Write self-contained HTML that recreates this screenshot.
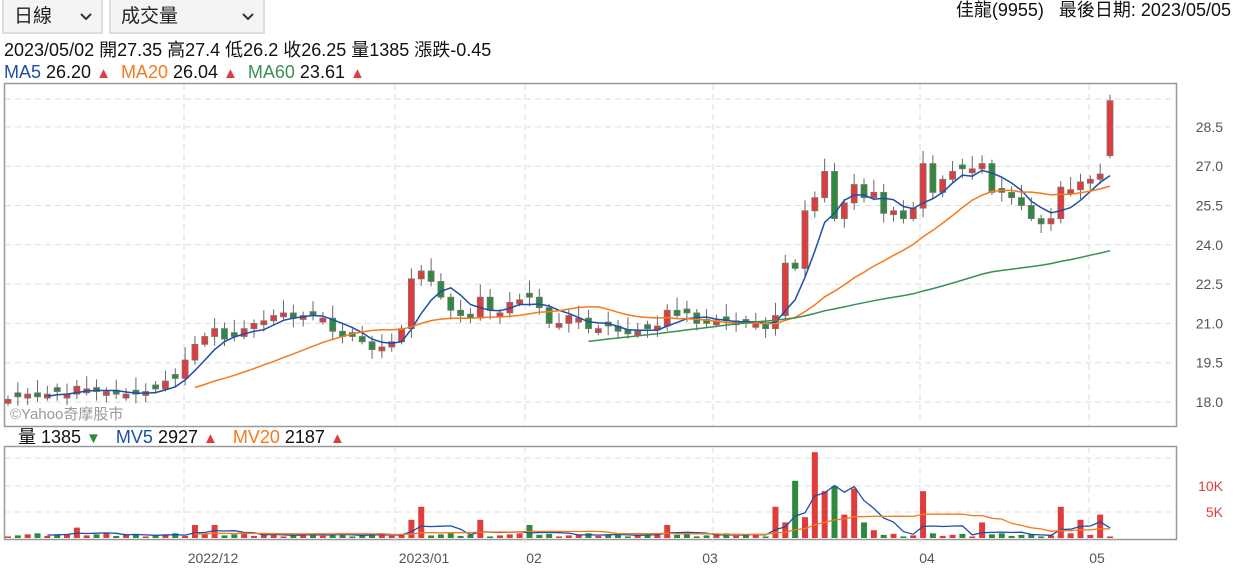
<!DOCTYPE html>
<html><head><meta charset="utf-8"><style>
body{margin:0;width:1241px;height:573px;background:#fff;font-family:"Liberation Sans","Noto Sans CJK TC",sans-serif;overflow:hidden;position:relative}
.sel{position:absolute;top:0;height:34px;background:#f4f4f4;border:2px solid #ddd;border-top:none;box-sizing:border-box;font-size:19px;color:#222;line-height:34px;padding-left:10px}
.sel svg{position:absolute;right:9px;top:13px}
.t{position:absolute;font-size:18px;color:#111;white-space:nowrap;line-height:20px}
.tr{font-size:15px}
</style></head><body>
<div class="sel" style="left:2px;width:101px">日線<svg width="12" height="8"><path d="M1 1L6 6L11 1" stroke="#333" stroke-width="2" fill="none"/></svg></div>
<div class="sel" style="left:109px;width:156px">成交量<svg width="12" height="8"><path d="M1 1L6 6L11 1" stroke="#333" stroke-width="2" fill="none"/></svg></div>
<div class="t" style="right:10px;top:0px">佳龍(9955)&nbsp;&nbsp;&nbsp;最後日期: 2023/05/05</div>
<div class="t" style="left:4px;top:40px">2023/05/02 開27.35 高27.4 低26.2 收26.25 量1385 漲跌-0.45</div>
<div class="t" style="left:4px;top:62px"><span style="color:#1f4ea8">MA5</span> 26.20 <span class="tr" style="color:#e03c3c">▲</span>&nbsp; <span style="color:#f57a1a">MA20</span> 26.04 <span class="tr" style="color:#e03c3c">▲</span>&nbsp; <span style="color:#3a8f55">MA60</span> 23.61 <span class="tr" style="color:#e03c3c">▲</span></div>
<div class="t" style="left:18px;top:427px">量 1385 <span class="tr" style="color:#2f8a3f">▼</span>&nbsp;&nbsp; <span style="color:#1f4ea8">MV5</span> 2927 <span class="tr" style="color:#e03c3c">▲</span>&nbsp;&nbsp; <span style="color:#f57a1a">MV20</span> 2187 <span class="tr" style="color:#e03c3c">▲</span></div>
<svg id="c" width="1241" height="573" style="position:absolute;left:0;top:0" font-family="Liberation Sans, sans-serif"></svg>
<script>
var s=document.getElementById('c'),h='';
function Y(p){return 402-(p-18)*26.2}
var gx=[184,395,525,713,920,1089];
h+='<rect x="4.5" y="83.5" width="1172" height="343" fill="none" stroke="#999" stroke-width="1.5"/>';
h+='<rect x="4.5" y="446.5" width="1172" height="93" fill="none" stroke="#999" stroke-width="1.5"/>';
[28.5,27,25.5,24,22.5,21,19.5,18].forEach(function(p){var y=Y(p);h+='<line x1="5" x2="1176" y1="'+y+'" y2="'+y+'" stroke="#ddd" stroke-dasharray="6,4"/>';h+='<text x="1223" y="'+(y+5)+'" text-anchor="end" font-size="14" fill="#555">'+p.toFixed(1)+'</text>'});
h+='<line x1="5" x2="1176" y1="99" y2="99" stroke="#ddd" stroke-dasharray="6,4"/>';
[458,486,512].forEach(function(y){h+='<line x1="5" x2="1176" y1="'+y+'" y2="'+y+'" stroke="#ddd" stroke-dasharray="6,4"/>'});
gx.forEach(function(x){h+='<line x1="'+x+'" x2="'+x+'" y1="84" y2="426" stroke="#ddd" stroke-dasharray="6,4"/><line x1="'+x+'" x2="'+x+'" y1="447" y2="548" stroke="#ddd" stroke-dasharray="6,4"/>'});
h+='<text x="1223" y="491" text-anchor="end" font-size="14" fill="#e03c3c">10K</text><text x="1223" y="517" text-anchor="end" font-size="14" fill="#e03c3c">5K</text>';
[['2022/12',213],['2023/01',424],['02',534],['03',710],['04',927],['05',1097]].forEach(function(d){h+='<text x="'+d[1]+'" y="563" text-anchor="middle" font-size="14" fill="#555">'+d[0]+'</text>'});
h+='<text x="10" y="419" font-size="15" fill="#999">©Yahoo奇摩股市</text>';
var C=[18.1,18.2,18.3,18.2,18.3,18.4,18.3,18.6,18.5,18.4,18.4,18.3,18.3,18.3,18.4,18.5,18.8,18.9,
19.6,20.2,20.5,20.8,20.4,20.5,20.8,21.0,21.1,21.3,21.4,21.2,21.3,21.3,21.2,20.7,20.5,20.5,20.3,20.0,20.1,20.3,20.8,22.7,23.0,22.6,22.0,21.5,21.3,21.2,22.0,21.5,21.4,21.8,21.9,22.0,21.6,21.0,21.0,21.3,21.2,20.8,20.8,20.9,20.7,20.6,20.7,20.8,20.9,21.5,21.3,21.4,21.0,21.0,21.1,21.1,21.1,21.0,21.0,20.8,21.3,23.3,23.1,25.3,25.8,26.8,25.0,25.6,26.3,25.8,26.0,25.2,25.3,25.0,25.4,27.1,26.0,26.5,26.8,26.9,26.9,27.1,26.0,26.0,25.8,25.5,25.0,24.8,25.0,26.2,26.1,26.4,26.5,26.7,29.5];
var n=C.length,X=function(i){return 8+i*(1110-8)/(n-1)};
var V=[];for(var i=0;i<n;i++)V.push(0.3+((i*37)%7)/10);
var sp={7:2,19:2.5,21:2.5,41:3.5,42:6,48:3.5,53:2.5,67:2.5,78:6,79:3,80:11,81:4,82:16.5,83:9,84:10,85:4.5,86:9.5,87:3,88:1.5,93:9,99:3,107:6,109:3.5,111:4.5,115:16};
for(var k in sp)V[k]=sp[k];
for(var i=0;i<n;i++){var x=X(i),c=C[i],o=i?C[i-1]:c-0.1;if(i==n-1)o=27.4;
if(Math.abs(c-o)<0.12)o=c+(i%2?0.15:-0.15);
var up=c>=o,col=up?'#e03c3c':'#2f8a3f',t=Y(Math.max(o,c)),b=Y(Math.min(o,c));
var hi=Math.max(o,c)+0.15+((i*13)%5)/12,lo=Math.min(o,c)-0.1-((i*7)%4)/12;
h+='<line x1="'+x+'" x2="'+x+'" y1="'+Y(hi)+'" y2="'+Y(lo)+'" stroke="#666"/>';
h+='<rect x="'+(x-3)+'" y="'+t+'" width="6" height="'+(b-t)+'" fill="'+col+'" stroke="#777" stroke-width="0.8"/>';
var vc=up?'#e03c3c':'#2f8a3f';h+='<rect x="'+(x-3)+'" y="'+(538-V[i]*5.2)+'" width="6" height="'+(V[i]*5.2)+'" fill="'+vc+'"/>';}
function ma(a,p,f,col,w){var d='';for(var i=p-1;i<n;i++){var s2=0;for(var j=i-p+1;j<=i;j++)s2+=a[j];d+=(d?'L':'M')+X(i).toFixed(1)+' '+f(s2/p).toFixed(1)}h+='<path d="'+d+'" fill="none" stroke="'+col+'" stroke-width="'+w+'"/>'}
var C2=C.slice();C2[n-1]=27.5;
ma(C2,5,Y,'#1f4ea8',1.5);ma(C2,20,Y,'#f57a1a',1.5);ma(C2,60,Y,'#3a8f55',1.5);
var vy=function(v){return 538-v*5.2};
ma(V,5,vy,'#1f4ea8',1.3);ma(V,20,vy,'#f57a1a',1.3);
s.innerHTML=h;
</script>
</body></html>
